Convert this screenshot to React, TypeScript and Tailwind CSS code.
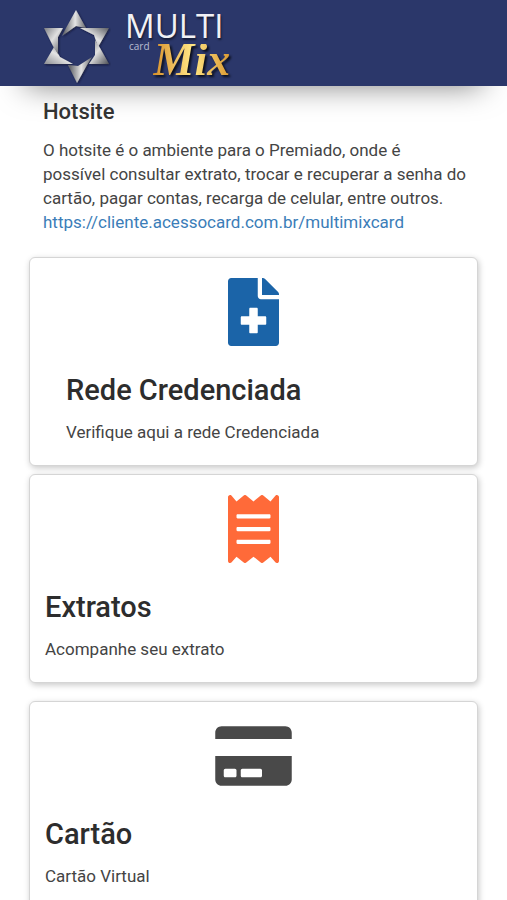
import type { ReactNode } from "react";
import { FaCreditCard, FaFileMedical, FaReceipt } from "react-icons/fa";

function StarLogo() {
  return (
    <svg viewBox="0 0 68 76" className="h-[76px] w-[68px]" aria-hidden="true">
      <defs>
        <linearGradient id="tipVertical" x1="0" y1="0" x2="1" y2="0">
          <stop offset="0.1" stopColor="#6b6d72" />
          <stop offset="0.55" stopColor="#e4e4e4" />
          <stop offset="1" stopColor="#66686d" />
        </linearGradient>
        <linearGradient id="tipFalling" x1="0" y1="0" x2="1" y2="1">
          <stop offset="0" stopColor="#7c7e83" />
          <stop offset="0.45" stopColor="#e0e0e0" />
          <stop offset="1" stopColor="#4c4e55" />
        </linearGradient>
        <linearGradient id="tipRising" x1="0" y1="1" x2="1" y2="0">
          <stop offset="0" stopColor="#8a8c91" />
          <stop offset="0.5" stopColor="#e4e4e4" />
          <stop offset="1" stopColor="#5a5c62" />
        </linearGradient>
        <filter id="starShadow" x="-20%" y="-20%" width="140%" height="140%">
          <feDropShadow dx="1" dy="1" stdDeviation="1" floodColor="#0b0f25" floodOpacity="0.7" />
        </filter>
      </defs>
      <g filter="url(#starShadow)">
        <path d="M33 2 L43 20 L33 18 L19 28 L23 20 Z" fill="url(#tipVertical)" />
        <path d="M66 20 L55 39 L51 27 L37 20 Z" fill="url(#tipRising)" />
        <path d="M66 56 L46 56 L52 47 L52 32 L57 40 Z" fill="url(#tipFalling)" />
        <path d="M34 75 L25 57 L35 58 L49 49 L44 57 Z" fill="url(#tipVertical)" />
        <path d="M1 56 L11 39 L17 49 L30 56 Z" fill="url(#tipRising)" />
        <path d="M1 20 L20 20 L15 29 L15 46 L10 38 Z" fill="url(#tipFalling)" />
      </g>
    </svg>
  );
}

function Brand() {
  return (
    <div className="flex items-start gap-[14px]" role="img" aria-label="MULTI card Mix">
      <StarLogo />
      <div className="flex flex-col">
        <span className="font-['Open_Sans',sans-serif] text-[33px] leading-9 text-[#f1f1f5] [text-shadow:1px_2px_2px_rgba(0,0,0,0.5)]">
          MULTI
        </span>
        <span className="flex items-start pl-1">
          <span className="-mt-1 font-['Open_Sans',sans-serif] text-[10px] leading-3 text-[#b9bed2]">card</span>
          <span className="bg-linear-to-r from-[#d58a1c] via-[#ffe684] to-[#d89325] bg-clip-text px-1 font-['Liberation_Serif',serif] text-[46px] leading-8 font-bold text-transparent italic drop-shadow-[2px_2px_1px_rgba(0,0,0,0.75)]">
            Mix
          </span>
        </span>
      </div>
    </div>
  );
}

type CardProps = {
  icon: ReactNode;
  title: string;
  text: string;
  bodyClass: string;
};

function Card({ icon, title, text, bodyClass }: CardProps) {
  return (
    <article className="rounded-md border border-[#d5d5d5] bg-white pt-5 pb-[21px] shadow-[1px_2px_6px_rgba(0,0,0,0.22)]">
      <div className="flex justify-center">{icon}</div>
      <div className={bodyClass}>
        <h2 className="text-[29px] leading-8 font-medium text-[#2d2d2d]">{title}</h2>
        <p className="mt-[14px] text-[17px] leading-6">{text}</p>
      </div>
    </article>
  );
}

export default function App() {
  return (
    <div className="h-screen overflow-hidden bg-white font-[Roboto,sans-serif] text-[#444]">
      <header className="h-[86px] bg-[#2b376a] px-[43px] pt-2 shadow-[0_25px_30px_-25px_rgba(0,0,0,0.5)]">
        <Brand />
      </header>
      <main>
        <section className="pt-3 pr-9 pl-[43px]">
          <h1 className="text-[22px] leading-7 font-medium text-[#333]">Hotsite</h1>
          <p className="mt-3 text-[17px] leading-6">
            O hotsite é o ambiente para o Premiado, onde é
            <br />
            possível consultar extrato, trocar e recuperar a senha do cartão, pagar contas, recarga de celular, entre
            outros.
          </p>
          <a className="block text-[17px] leading-6 text-[#3b7db8]" href="https://cliente.acessocard.com.br/multimixcard">
            https://cliente.acessocard.com.br/multimixcard
          </a>
        </section>
        <section className="mx-[29px] mt-[23px] flex flex-col">
          <Card
            icon={<FaFileMedical className="h-[68px] w-[51px] text-[#1b64a8]" />}
            title="Rede Credenciada"
            text="Verifique aqui a rede Credenciada"
            bodyClass="px-9 pt-7"
          />
          <div className="mt-2">
            <Card
              icon={<FaReceipt className="h-[68px] w-[51px] text-[#ff6a39]" />}
              title="Extratos"
              text="Acompanhe seu extrato"
              bodyClass="px-[15px] pt-7"
            />
          </div>
          <div className="mt-[18px]">
            <Card
              icon={<FaCreditCard className="h-[68px] w-[77px] text-[#494949]" />}
              title="Cartão"
              text="Cartão Virtual"
              bodyClass="px-[15px] pt-7"
            />
          </div>
        </section>
      </main>
    </div>
  );
}
